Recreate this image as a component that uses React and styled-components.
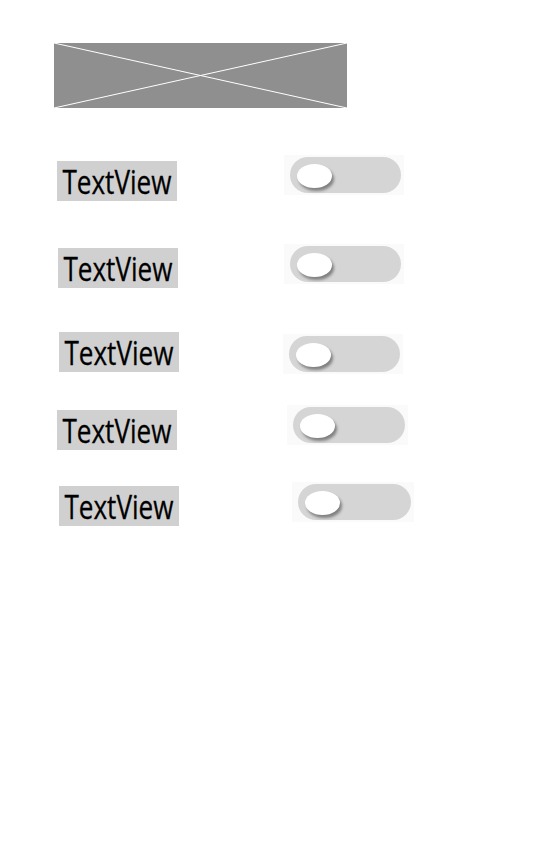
import React from 'react'
import styled, { createGlobalStyle } from 'styled-components'

const GlobalStyle = createGlobalStyle`
  body {
    margin: 0;
    background: #fff;
    font-family: "Open Sans", "Noto Sans", sans-serif;
  }
`

const Screen = styled.div`
  width: 540px;
  height: 864px;
  background: #fff;
  display: flex;
  flex-direction: column;
  padding-top: 43px;
  box-sizing: border-box;
`

const Placeholder = styled.div`
  margin-left: 54px;
  width: 293px;
  height: 65px;
  background: #8f8f8f;
  display: flex;

  svg {
    width: 100%;
    height: 100%;
  }
`

const Row = styled.div`
  display: flex;
  align-items: flex-start;
  height: 40px;
  margin-top: ${p => p.gap}px;
  padding-left: ${p => p.labelX}px;
`

const Label = styled.div`
  width: 120px;
  height: 40px;
  background: #d0d0d0;
  color: #000;
  display: flex;
  align-items: center;
  justify-content: center;
  flex-shrink: 0;

  span {
    font-size: 33px;
    line-height: 40px;
    display: inline-block;
    flex-shrink: 0;
    margin: 1px -20px 0;
    transform: scaleX(0.79);
    white-space: nowrap;
    -webkit-text-stroke: 0.3px #000;
  }
`

const SwitchBox = styled.div`
  padding: 2px 3px 2px 6px;
  margin-left: ${p => p.offsetX - 6}px;
  margin-top: ${p => p.offsetY - 2}px;
  background: #fafafa;
`

const Track = styled.div`
  width: ${p => p.width}px;
  height: 36px;
  border-radius: 18px;
  background: #d5d5d5;
  display: flex;
  align-items: center;
  padding-left: 7px;
  box-sizing: border-box;
`

const Thumb = styled.div`
  width: 35px;
  height: 24px;
  border-radius: 50%;
  background: #fff;
  margin-top: 1px;
  box-shadow: 2px 3px 3px rgba(0, 0, 0, 0.4);
`

const rows = [
  { gap: 53, labelX: 57, trackX: 290, dy: -4, width: 111 },
  { gap: 47, labelX: 58, trackX: 290, dy: -2, width: 111 },
  { gap: 44, labelX: 59, trackX: 289, dy: 4, width: 111 },
  { gap: 38, labelX: 57, trackX: 293, dy: -3, width: 112 },
  { gap: 36, labelX: 59, trackX: 298, dy: -2, width: 113 }
]

const App = () => (
  <Screen>
    <GlobalStyle />
    <Placeholder>
      <svg viewBox="0 0 293 65" preserveAspectRatio="none">
        <line x1="0" y1="0" x2="293" y2="65" stroke="#fff" strokeWidth="1" />
        <line x1="0" y1="65" x2="293" y2="0" stroke="#fff" strokeWidth="1" />
      </svg>
    </Placeholder>
    {rows.map((r, i) => (
      <Row key={i} gap={r.gap} labelX={r.labelX}>
        <Label>
          <span>TextView</span>
        </Label>
        <SwitchBox offsetX={r.trackX - r.labelX - 120} offsetY={r.dy}>
          <Track width={r.width}>
            <Thumb />
          </Track>
        </SwitchBox>
      </Row>
    ))}
  </Screen>
)

export default App
